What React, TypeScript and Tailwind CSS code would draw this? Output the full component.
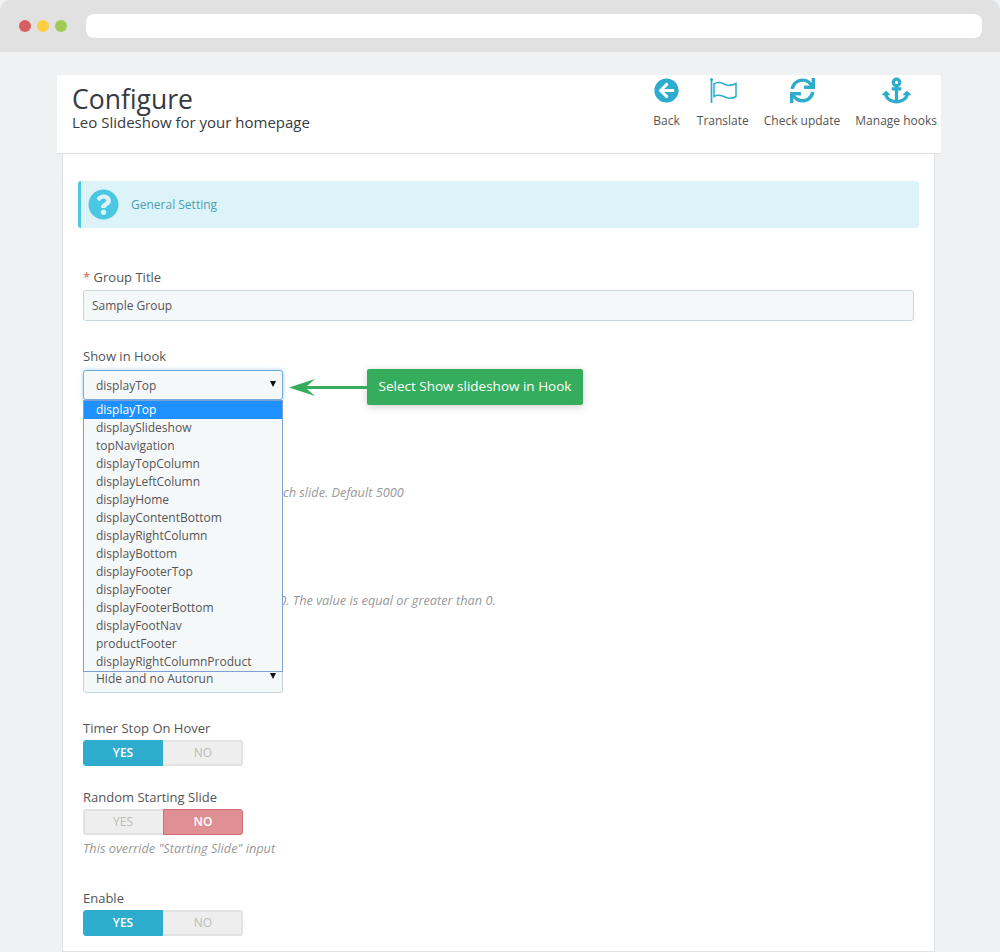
import React from "react";
import { FaArrowCircleLeft, FaAnchor, FaQuestionCircle, FaSync } from "react-icons/fa";

const hooks = ["displayTop","displaySlideshow","topNavigation","displayTopColumn","displayLeftColumn","displayHome","displayContentBottom","displayRightColumn","displayBottom","displayFooterTop","displayFooter","displayFooterBottom","displayFootNav","productFooter","displayRightColumnProduct"];

function Caret() {
  return <span className="absolute right-[6px] top-[10px] w-0 h-0 border-l-[3.5px] border-r-[3.5px] border-t-[6px] border-l-transparent border-r-transparent border-t-[#111]" />;
}

function Toggle({ yes }: { yes: boolean }) {
  return (
    <div className="flex w-[160px] h-[26px] text-[12px] leading-[24px] text-center">
      <div className={yes ? "w-[80px] rounded-l-[3px] bg-[#2eacce] border border-[#2eacce] text-white font-semibold" : "w-[80px] pr-[2px] rounded-l-[3px] bg-[#eeeeee] border-2 border-[#e2e2e2] border-r-0 leading-[22px] text-[#bbbbbb]"}>YES</div>
      <div className={yes ? "w-[80px] pl-[2px] rounded-r-[3px] bg-[#eeeeee] border-2 border-[#e2e2e2] border-l-0 leading-[22px] text-[#bbbbbb]" : "w-[80px] rounded-r-[3px] bg-[#e08f95] border border-[#cf6e75] text-white font-semibold"}>NO</div>
    </div>
  );
}

function Action({ icon, label }: { icon: React.ReactNode; label: string }) {
  return (
    <div className="flex flex-col items-center">
      <div className="h-[30px] flex items-center justify-center text-[#2eacce]">{icon}</div>
      <div className="mt-[8px] text-[12px] leading-[16px] text-[#555]">{label}</div>
    </div>
  );
}

const fieldInput = "h-[31px] rounded-[3px] border border-[#c7d6db] bg-[#f5f8f9] text-[12px] text-[#555] leading-[29px]";
const label = "text-[13px] leading-[16px]";
const hint = "text-[12.75px] leading-[16px] italic text-[#999]";

export default function App() {
  return (
    <div className="h-[952px] overflow-hidden bg-[#eff1f3] font-['Open_Sans',sans-serif] text-[#555]">
      <div className="h-[52px] bg-[#e1e1e1] rounded-t-[10px] flex items-center pl-[19px]">
        <div className="flex gap-[6px]">
          <span className="w-3 h-3 rounded-full bg-[#d9605f]" />
          <span className="w-3 h-3 rounded-full bg-[#fdcf41]" />
          <span className="w-3 h-3 rounded-full bg-[#a1cb56]" />
        </div>
        <div className="ml-[19px] w-[896px] h-[24px] rounded-[8px] bg-white" />
      </div>

      <div className="ml-[57px] w-[884px] mt-[23px] h-[79px] bg-white border-b border-[#e0e0e0] flex justify-between pl-[15px] pr-[4px]">
        <div className="pt-[6px]">
          <div className="text-[26.5px] leading-[36px] text-[#363a41]">Configure</div>
          <div className="text-[15px] leading-[20px] -mt-[5px] text-[#363a41]">Leo Slideshow for your homepage</div>
        </div>
        <div className="flex gap-[15px]">
          <div className="mr-[2px]"><Action icon={<FaArrowCircleLeft size={25} />} label="Back" /></div>
          <Action label="Translate" icon={
            <svg width="30" height="26" viewBox="0 0 30 26" fill="none" stroke="currentColor" strokeWidth="1.5">
              <circle cx="3.500" cy="2.500" r="1.500" fill="currentColor" stroke="none" />
              <path d="M3.500 2v24" strokeWidth="1.700" />
              <path d="M6 7c4-2.500 7-1.500 10 0s7 2 12-.5v13c-4 2.500-8 2-11 .5s-7-2.500-11-.5z" />
            </svg>
          } />
          <Action icon={<FaSync size={25} />} label="Check update" />
          <Action icon={<FaAnchor size={29} />} label="Manage hooks" />
        </div>
      </div>

      <div className="ml-[62px] w-[873px] h-[798px] bg-white border-x border-b border-[#dfe1e4] pl-[15px] pr-[15px] pt-[27px]">
        <div className="h-[47px] w-[841px] bg-[#dcf4f9] border-l-[3px] border-[#4bc9e3] rounded-[3px] flex items-center pl-[7px] text-[#4c9db3]">
          <FaQuestionCircle size={31} className="text-[#4ac7e2]" />
          <span className="ml-[12px] text-[12px]">General Setting</span>
        </div>

        <div className="ml-[5px] w-[831px]">
          <div className={`mt-[41px] ${label}`}><span className="text-[#e0603f]">*</span> Group Title</div>
          <div className={`mt-[5px] pl-[8px] ${fieldInput}`}>Sample Group</div>

          <div className={`mt-[27px] ${label}`}>Show in Hook</div>
          <div className="relative mt-[6px] w-[200px] h-[30px] rounded-[3px] border border-[#76abde] bg-[#f5f8f9] shadow-[0_0_4px_rgba(102,175,233,0.6)] text-[12px] leading-[29px] pl-[12px]">
            displayTop
            <Caret />
            <div className="absolute z-10 left-[-1px] top-[29px] w-[200px] h-[272px] bg-[#f5f8f9] border border-[#7d9fd3] leading-[18px]">
              {hooks.map((h, i) => (
                <div key={h} className={i === 0 ? "h-[18px] pl-[12px] bg-[#1e90ff] text-white" : "h-[18px] pl-[12px]"}>{h}</div>
              ))}
            </div>
            <div className="absolute z-10 left-[283px] top-[-2px] w-[216px] h-[36px] bg-[#35ad5c] rounded-[2px] shadow-[0_2px_8px_rgba(0,0,0,0.18)] text-white text-[13.5px] leading-[35px] text-center">Select Show slideshow in Hook</div>
            <svg className="absolute z-10 left-[202px] top-[6px]" width="82" height="20" viewBox="0 0 82 20">
              <path d="M3 10.500 L29 2 L21 9 L82 9 L82 12 L21 12 L29 19 Z" fill="#35ad5c" />
            </svg>
          </div>

          <div className={`mt-[26px] ${label}`}>Timer Delay</div>
          <div className={`mt-[5px] w-[200px] pl-[12px] ${fieldInput}`}>5000</div>
          <div className={`mt-[6px] ${hint}`}>Time in milliseconds, to show for each slide. Default 5000</div>

          <div className={`mt-[35px] ${label}`}>Starting Slide</div>
          <div className={`mt-[5px] w-[200px] pl-[12px] ${fieldInput}`}>0</div>
          <div className={`mt-[5px] ${hint}`}>Slide index, to start with, default is 0. The value is equal or greater than 0.</div>

          <div className={`mt-[33px] ${label}`}>Navigation</div>
          <div className={`relative mt-[5px] w-[200px] pl-[12px] !leading-[31px] ${fieldInput}`}>Hide and no Autorun<Caret /></div>

          <div className={`mt-[27px] ${label}`}>Timer Stop On Hover</div>
          <div className="mt-[4px]"><Toggle yes /></div>

          <div className={`mt-[23px] ${label}`}>Random Starting Slide</div>
          <div className="mt-[4px]"><Toggle yes={false} /></div>
          <div className={`mt-[5px] ${hint}`}>This override "Starting Slide" input</div>

          <div className={`mt-[34px] ${label}`}>Enable</div>
          <div className="mt-[4px]"><Toggle yes /></div>
        </div>
      </div>
    </div>
  );
}
